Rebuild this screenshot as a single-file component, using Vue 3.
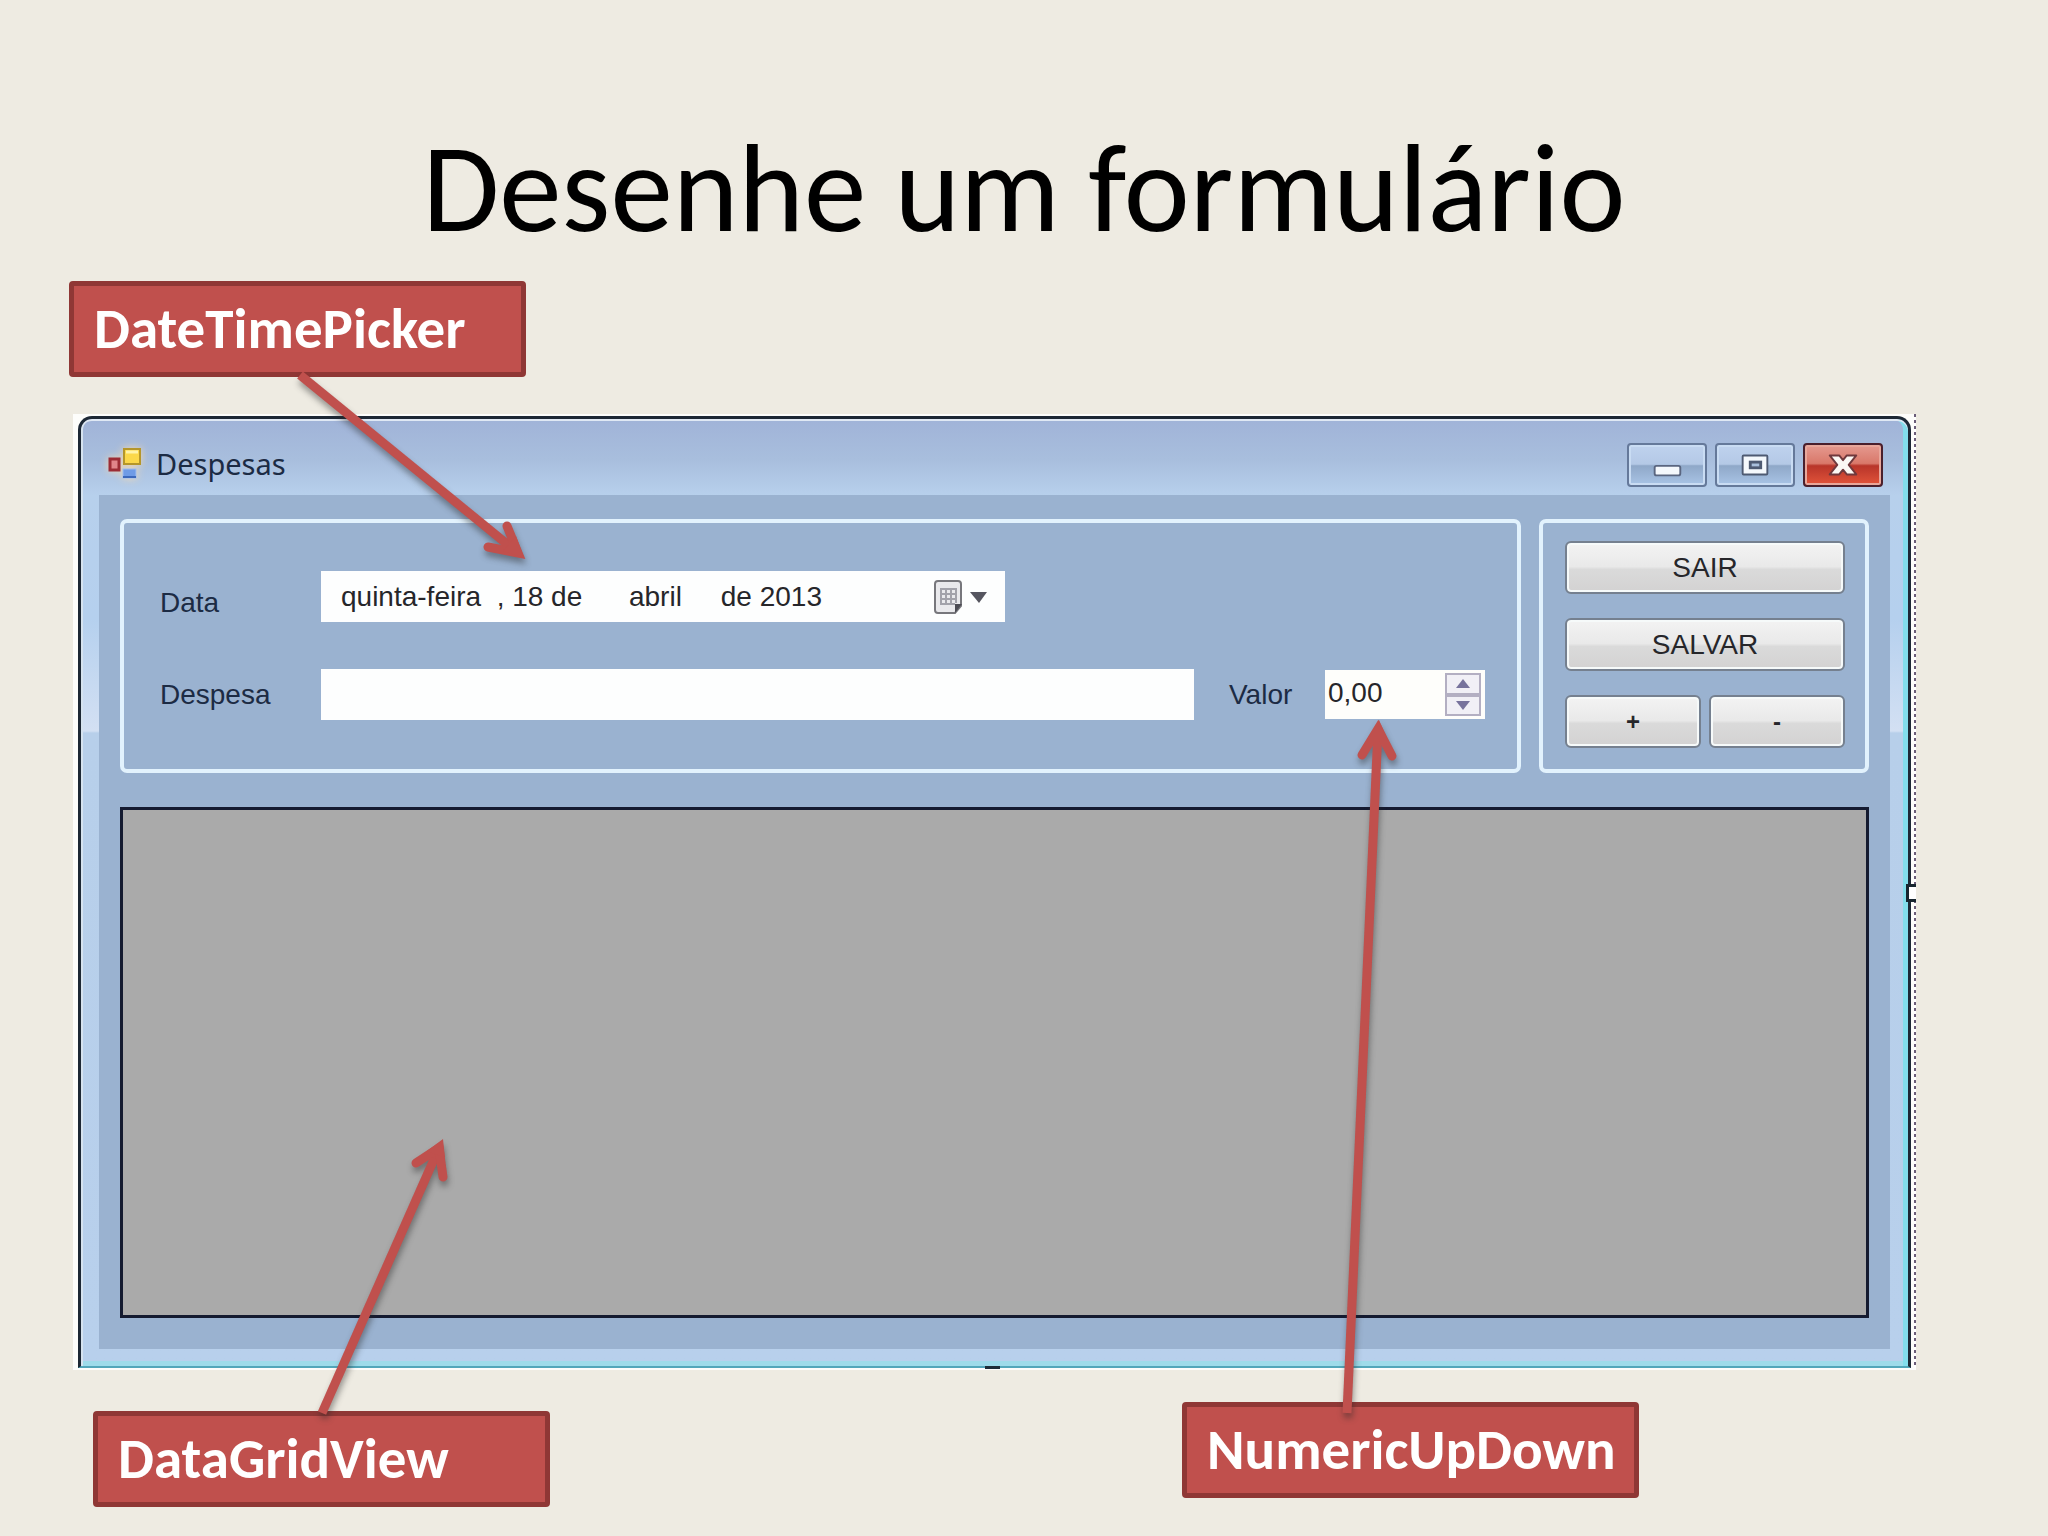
<script setup>
import { ref } from 'vue'

const date = ref('quinta-feira  , 18 de      abril     de 2013')
const expense = ref('')
const amount = ref('0,00')

const arrows = [
  { shaft: 'M300 375 L518 553', head: 'M507 526 L518 553 L488 547', tip: '524,558 503,551 516,536' },
  { shaft: 'M322 1413 L439 1148', head: 'M416 1163 L439 1148 L443 1177', tip: '443,1139 427,1151 445,1158' },
  { shaft: 'M1347 1413 L1378 730', head: 'M1362 755 L1378 729 L1392 756', tip: '1379,720 1370,738 1387,738' },
]

function step(delta) {
  const next = Math.max(0, parseFloat(amount.value.replace(',', '.')) + delta)
  amount.value = next.toFixed(2).replace('.', ',')
}
</script>

<template>
  <main class="slide">
    <h1 class="title">Desenhe um formulário</h1>
    <div class="callout callout-picker">DateTimePicker</div>

    <section class="designer">
      <div class="window">
        <header class="titlebar">
          <svg class="app-icon" viewBox="0 0 36 34" aria-hidden="true">
            <rect x="4" y="13" width="9" height="11" fill="#e0858a" stroke="#9c2c35" stroke-width="3" />
            <rect x="17" y="23" width="13" height="9" fill="#6f9be6" stroke="#9dbcf0" stroke-width="1" />
            <path d="M17 31 h13" stroke="#3c68bc" stroke-width="2" />
            <rect x="18" y="3" width="16" height="15" fill="#fbd84a" stroke="#b5962a" stroke-width="2" />
            <path d="M20 6 h12" stroke="#fff3a8" stroke-width="3" />
          </svg>
          <span class="window-title">Despesas</span>
          <div class="window-buttons">
            <button type="button" class="win-btn" aria-label="Minimizar">
              <svg viewBox="0 0 80 43"><rect x="27" y="22" width="27" height="10" rx="2" fill="#f4f8fc" stroke="#5a6680" stroke-width="2" /></svg>
            </button>
            <button type="button" class="win-btn" aria-label="Maximizar">
              <svg viewBox="0 0 80 43">
                <rect x="27" y="11" width="26" height="20" rx="1" fill="#f4f8fc" stroke="#4e5a72" stroke-width="2" />
                <rect x="35" y="18" width="11" height="6" fill="#a9bfdc" stroke="#4e5a72" stroke-width="3" />
              </svg>
            </button>
            <button type="button" class="win-btn win-close" aria-label="Fechar">
              <svg viewBox="0 0 80 43">
                <path d="M26 11 h10 l4 5 l4 -5 h10 l-8 10 l8 10 h-10 l-4 -5 l-4 5 h-10 l8 -10 z" fill="#fbf8f4" stroke="#70383c" stroke-width="2" stroke-linejoin="round" />
              </svg>
            </button>
          </div>
        </header>

        <form class="client" @submit.prevent>
          <div class="top-row">
            <div class="group fields">
              <div class="row">
                <label class="field-label label-low" for="date">Data</label>
                <div class="date-picker">
                  <input id="date" v-model="date" type="text" />
                  <button type="button" class="calendar" aria-label="Abrir calendário">
                    <svg viewBox="0 0 54 34" aria-hidden="true">
                      <path d="M4 1 h20 q3 0 3 3 v22 l-6 7 h-17 q-3 0 -3 -3 v-26 q0 -3 3 -3 z" fill="#e9e9ec" stroke="#77777c" stroke-width="2" />
                      <path d="M6 9 h17 M6 14 h17 M6 19 h17 M6 24 h15 M7 8 v17 M12 8 v17 M17 8 v17 M22 8 v15" stroke="#a2a2aa" stroke-width="2" />
                      <path d="M28 24 h-7 v9 z" fill="#4c4c54" />
                      <path d="M36 12 h17 l-8 11 z" fill="#55555f" />
                    </svg>
                  </button>
                </div>
              </div>
              <div class="row">
                <label class="field-label" for="expense">Despesa</label>
                <input id="expense" v-model="expense" class="expense" type="text" />
                <label class="amount-label" for="amount">Valor</label>
                <div class="numeric">
                  <input id="amount" v-model="amount" type="text" inputmode="decimal" />
                  <div class="spinner">
                    <button type="button" aria-label="Aumentar" @click="step(1)">
                      <svg viewBox="0 0 14 9"><path d="M7 0 L14 9 H0 z" fill="#77739c" /></svg>
                    </button>
                    <button type="button" aria-label="Diminuir" @click="step(-1)">
                      <svg viewBox="0 0 14 9"><path d="M0 0 H14 L7 9 z" fill="#77739c" /></svg>
                    </button>
                  </div>
                </div>
              </div>
            </div>
            <div class="group actions">
              <button type="button" class="action">SAIR</button>
              <button type="button" class="action">SALVAR</button>
              <div class="pair">
                <button type="button" class="action sign">+</button>
                <button type="button" class="action sign">-</button>
              </div>
            </div>
          </div>
          <div class="data-grid"></div>
        </form>
      </div>
      <span class="handle-right"></span>
      <span class="handle-bottom"></span>
    </section>

    <div class="bottom-callouts">
      <div class="callout callout-grid">DataGridView</div>
      <div class="callout callout-numeric">NumericUpDown</div>
    </div>

    <svg class="arrows" viewBox="0 0 2048 1536" aria-hidden="true">
      <g v-for="arrow in arrows" :key="arrow.shaft">
        <path :d="arrow.shaft" class="shaft" />
        <path :d="arrow.head" class="head" />
        <polygon :points="arrow.tip" fill="#c0504d" />
      </g>
    </svg>
  </main>
</template>

<style>
body {
  margin: 0;
  background: #eeebe2;
}
</style>

<style scoped>
* {
  box-sizing: border-box;
}

.slide {
  position: relative;
  min-height: 100vh;
  padding-top: 123px;
  background: #eeebe2;
  font-family: "Liberation Sans", Arial, sans-serif;
  font-size: 28px;
  color: #1c2b44;
}

.title {
  margin: 0 0 26px;
  font: 400 125px/132px Carlito, Lato, sans-serif;
  color: #000;
  text-align: center;
}

.callout {
  width: 457px;
  height: 96px;
  padding-left: 20px;
  border: 5px solid #8f3735;
  border-radius: 4px;
  background: #c0504d;
  color: #fff;
  font: 700 57px/86px Carlito, Lato, sans-serif;
  white-space: nowrap;
}

.callout-picker {
  margin-left: 69px;
}

.designer {
  position: relative;
  margin: 37px 132px 0 73px;
  padding: 2px 5px 2px;
  background: #fdfdfb;
}

.designer::after {
  content: "";
  position: absolute;
  inset: 0 0 2px auto;
  width: 2px;
  background: repeating-linear-gradient(#6b5d78 0 3px, #fff 3px 6px);
}

.window {
  padding: 0 18px 17px;
  border: 3px solid #1d2835;
  border-bottom: 2px solid #52a6ba;
  border-radius: 14px 14px 0 0;
  background: linear-gradient(#a0b3d8 0, #a8bedd 40px, #b7d0ec 76px, #b5d0ee 200px, #d3e0f3 312px, #b7cfea 314px, #b8d0ec 100%);
  box-shadow: inset 0 2px #dfe8f4, inset 2px 0 #d6e3ef, inset -5px 0 #83ddec, inset 0 -5px #9edbea;
}

.titlebar {
  display: flex;
  align-items: center;
  height: 76px;
  padding: 0 7px;
}

.app-icon {
  width: 36px;
  height: 34px;
  margin-top: 12px;
  filter: drop-shadow(0 0 4px #f4d9b0);
}

.window-title {
  margin-left: 14px;
  padding-top: 14px;
  font: 400 29px/36px "Noto Sans", sans-serif;
}

.window-buttons {
  display: flex;
  gap: 8px;
  margin-left: auto;
  padding-top: 15px;
}

.win-btn {
  width: 80px;
  height: 44px;
  padding: 0;
  border: 2px solid #65799a;
  border-radius: 4px;
  background: linear-gradient(#bfd2ee 0, #b4c9e6 48%, #8fa8c8 52%, #a9c4e6 100%);
  box-shadow: inset 0 0 0 2px #c9dcf3;
}

.win-btn svg {
  display: block;
  width: 100%;
}

.win-close {
  border-color: #4a1f2c;
  background: linear-gradient(#e59a90 0, #d9786a 46%, #b8352a 52%, #e2543a 100%);
  box-shadow: inset 0 0 0 2px #e8a79b;
}

.client {
  padding: 24px 21px 31px;
  background: #9ab2d0;
}

.top-row {
  display: flex;
  gap: 18px;
}

.group {
  border: 4px solid #e2f2fd;
  border-radius: 7px;
}

.fields {
  display: flex;
  flex: 1;
  flex-direction: column;
  gap: 47px;
  padding: 48px 32px 49px 36px;
}

.row {
  display: flex;
  align-items: center;
  height: 51px;
}

.field-label {
  width: 161px;
}

.label-low {
  padding-top: 12px;
}

input {
  min-width: 0;
  padding: 0;
  border: 0;
  outline: 0;
  background: transparent;
  color: #26262a;
  font: inherit;
}

.date-picker {
  display: flex;
  align-items: center;
  width: 684px;
  height: 51px;
  padding: 0 17px 0 20px;
  background: #fdfefe;
}

.date-picker input {
  flex: 1;
  height: 48px;
}

.calendar {
  width: 54px;
  height: 34px;
  padding: 0;
  border: 0;
  background: none;
}

.calendar svg,
.spinner svg {
  display: block;
}

.expense {
  flex: 1;
  height: 51px;
  padding: 0 8px;
  background: #fdfefe;
}

.amount-label {
  width: 96px;
  margin-left: 35px;
}

.numeric {
  display: flex;
  width: 160px;
  height: 49px;
  padding: 3px 4px 3px 3px;
  background: #fefefb;
}

.numeric input {
  flex: 1;
  height: 40px;
}

.spinner {
  display: flex;
  flex-direction: column;
  width: 36px;
}

.spinner button {
  display: grid;
  flex: 1;
  place-items: center;
  padding: 0;
  border: 2px solid #b3afc2;
  background: #f1f0f6;
}

.spinner svg {
  width: 14px;
  height: 9px;
}

.actions {
  display: flex;
  flex-direction: column;
  gap: 24px;
  width: 330px;
  padding: 18px 20px 0 22px;
}

.action {
  width: 100%;
  height: 53px;
  padding: 0;
  border: 2px solid #75808f;
  border-radius: 6px;
  background: linear-gradient(#f3f3f3 0, #e9e9e9 48%, #dadada 54%, #d3d2d2 100%);
  box-shadow: inset 0 0 0 2px #f6fafa;
  color: #26262a;
  font: inherit;
}

.pair {
  display: flex;
  gap: 8px;
}

.sign {
  font-size: 24px;
  font-weight: 700;
}

.data-grid {
  height: 511px;
  margin-top: 34px;
  border: 3px solid #141a30;
  background: #aaa;
}

.handle-right {
  position: absolute;
  z-index: 1;
  top: 470px;
  right: 0;
  width: 10px;
  height: 18px;
  border: 3px solid #17252f;
  border-right: 0;
  background: #fff;
}

.handle-bottom {
  position: absolute;
  bottom: 1px;
  left: 49.5%;
  width: 15px;
  height: 3px;
  background: #1d2d38;
}

.bottom-callouts {
  display: flex;
  justify-content: space-between;
  margin: 32px 409px 0 93px;
}

.callout-grid {
  margin-top: 9px;
}

.arrows {
  position: absolute;
  top: 0;
  left: 0;
  width: 100%;
  pointer-events: none;
  filter: drop-shadow(1px 5px 3px rgba(40, 40, 40, 0.45));
}

.shaft,
.head {
  fill: none;
  stroke: #c0504d;
  stroke-width: 9px;
}

.head {
  stroke-linecap: round;
}
</style>
